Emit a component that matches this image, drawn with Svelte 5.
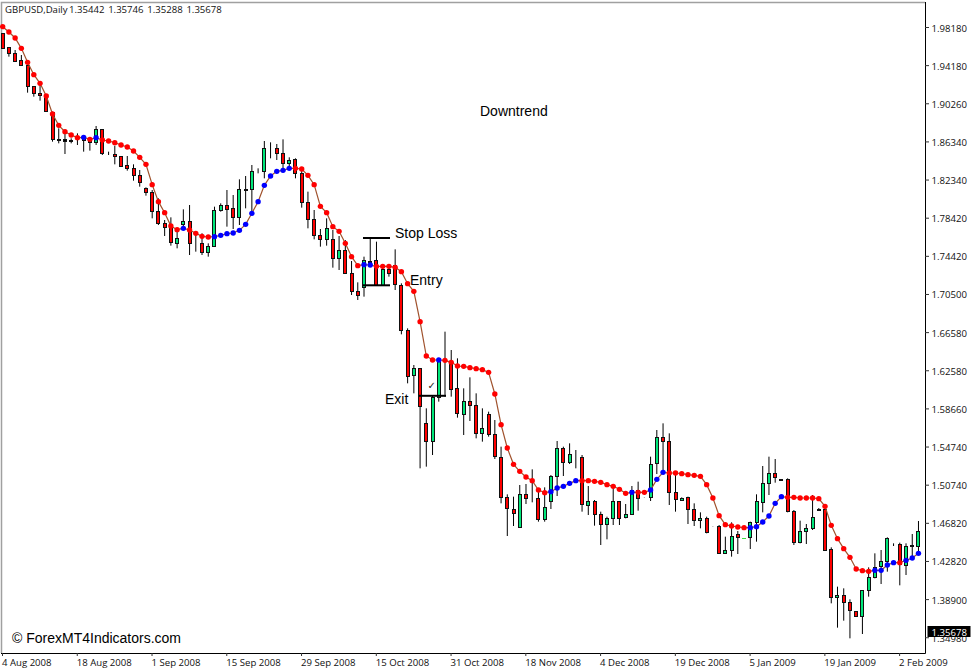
<script lang="ts">
	// bars traced off the chart at 3x: [bodyTop, bodyBottom, wickTop, wickBottom, colour, dotY, dotColour]
	// each block has its own y origin, values are in third-pixels from there
	const r = 'r', g = 'g', k = 'k', l = 'l', b = 'b';
	const blocks = [
		{ y0: 0, rows: [
			[100,145,100,145,r,80,r],[142,160,142,170,r,96,r],[160,182,150,185,r,114,r],[180,195,165,198,r,145,r],
			[195,258,195,278,r,187,r],[258,280,258,290,r,224,r],[280,284,255,302,r,250,r],[285,332,282,332,r,288,r],
			[335,418,335,425,r,342,r],[417,419,385,430,k,376,r],[418,422,395,462,k,395,r],[421,424,415,430,k,405,r],
			[420,421,400,435,k,413,r],[413,421,405,455,r,412,b],[413,427,413,452,r,418,r],[387,427,378,435,g,413,b],
			[388,460,388,465,r,420,r],[461,463,455,465,k,423,r],[463,469,437,493,r,428,r],[469,497,469,500,r,435,r],
			[495,505,468,512,r,441,r]
		] },
		{ y0: 130, rows: [
			[113,135,103,152,r,63,r],[134,157,120,170,r,82,r],[175,187,172,197,r,103,r],[186,242,180,265,r,164,r],
			[243,278,205,285,r,215,r],[280,292,270,318,r,248,r],[290,337,262,347,r,288,r],[324,338,300,355,g,299,r],
			[273,283,238,300,g,295,b],[273,338,225,375,r,300,r],[338,340,315,365,k,310,r],[340,367,310,375,r,319,r],
			[347,367,340,380,g,321,r],[240,347,230,350,g,320,b],[224,241,220,245,g,316,b],[226,236,180,290,r,311,b],
			[235,262,195,297,r,309,b],[178,260,148,285,g,301,b],[178,179,138,235,k,283,b],[124,178,105,250,g,250,b],
			[122,123,115,130,k,215,b],[55,124,33,145,g,166,b],[53,54,37,85,k,138,b],[55,70,42,90,r,124,b],
			[70,98,28,125,r,121,b],[91,98,82,118,g,115,b],[88,130,85,145,r,115,r],[130,217,115,233,r,117,r],
			[217,268,185,295,r,136,r],[268,315,240,328,r,164,r],[316,327,297,350,r,229,r],[295,327,265,347,g,248,r],
			[328,385,300,413,r,290,r],[359,385,318,420,g,304,r],[361,430,330,432,r,340,r],[430,483,393,495,r,380,r],
			[483,496,457,510,r,407,r],[390,472,380,500,g,404,b]
		] },
		{ y0: 220, rows: [
			[122,125,55,130,k,135,b],[120,195,65,195,r,139,r],[148,195,140,195,g,139,r],[148,158,135,170,r,139,r],
			[135,193,88,210,r,142,r],[195,330,190,343,r,155,r],[330,467,325,490,r,191,r],[445,466,435,520,g,214,r],
			[445,557,445,745,r,305,r],[608,662,565,740,r,408,r],[530,662,525,705,g,420,r],[422,530,415,545,g,420,b],
			[419,421,335,530,k,421,r],[432,508,390,530,r,427,r],[505,580,415,593,r,438,r],[543,583,505,645,g,439,r],
			[543,556,472,603,r,443,r],[556,640,520,655,r,446,r],[625,638,565,665,g,449,r],[583,643,575,650,r,457,r],
			[643,708,600,717,r,522,r]
		] },
		{ y0: 400, rows: [
			[170,290,140,310,r,74,r],[290,325,283,408,r,144,r],[328,338,290,378,r,193,r],[283,382,255,382,g,214,r],
			[283,293,252,312,r,231,r],[293,295,208,307,k,242,r],[295,358,270,365,r,270,r],[320,358,262,365,g,278,r],
			[227,302,225,327,g,275,b],[143,227,123,288,g,264,b],[143,185,140,228,r,259,b],[162,186,130,192,g,250,b],
			[162,163,150,205,k,242,b],[172,313,165,335,r,242,r],[302,314,258,345,g,242,r],[304,343,300,377,r,244,r],
			[343,372,335,435,r,247,r],[355,372,350,418,g,254,r],[304,355,265,375,g,259,r],[304,353,304,375,r,268,r],
			[343,352,312,355,g,280,r],[270,343,258,345,g,277,b],[270,295,245,332,r,277,r],[293,294,293,294,k,277,r],
			[193,292,170,303,g,270,b],[112,190,90,222,g,238,b],[112,124,70,218,r,217,b],[124,277,100,315,r,219,r],
			[277,298,225,335,r,219,r],[295,301,292,302,g,221,r],[292,328,290,372,r,224,r],[328,360,310,378,r,226,r],
			[353,361,337,385,g,229,r],[354,397,350,400,r,254,r],[378,379,378,379,k,294,r],[377,458,375,460,r,347,r]
		] },
		{ y0: 440, rows: [
			[331,338,290,340,g,254,r],[287,331,247,350,g,258,r],[283,292,273,342,r,261,r],[295,296,295,296,l,263,r],
			[247,292,245,327,g,263,b],[184,247,163,305,g,260,b],[130,185,78,217,g,246,b],[98,130,50,165,g,228,b],
			[98,112,57,128,r,190,b],[118,119,118,119,k,170,b],[118,213,115,217,r,172,r],[212,305,210,315,r,172,r],
			[274,305,242,310,g,174,r],[264,274,252,312,g,174,r],[232,265,165,270,g,174,r],[208,209,204,212,k,176,r],
			[207,330,195,333,r,199,r],[327,472,322,490,r,256,r],[464,472,440,563,g,296,r],[464,487,445,542,r,326,r],
			[487,510,478,595,r,352,r],[514,527,514,530,r,387,r],[451,529,451,582,g,392,r],[412,451,382,470,g,394,r],
			[380,412,340,415,g,391,b],[362,379,330,432,g,391,b],[295,362,292,395,g,375,b],[312,313,310,318,k,368,b],
			[313,373,308,436,r,368,r],[317,374,310,405,g,361,b],[316,318,282,350,k,354,b],[274,317,243,345,g,340,b]
		] }
	];

	const step = 6.23;
	const snap = (v) => Math.round(v) + 0.5;
	const bars = blocks
		.flatMap((block) => block.rows.map((row) => ({ y0: block.y0, row })))
		.map(({ y0, row }, i) => {
			const x = 2.67 + i * step;
			const top = snap(y0 + row[0] / 3);
			return {
				x,
				left: snap(x - 2),
				top,
				height: snap(y0 + row[1] / 3) - top,
				hi: y0 + row[2] / 3,
				lo: y0 + row[3] / 3,
				kind: row[4],
				dotY: y0 + row[5] / 3,
				dot: row[6]
			};
		});

	const smoothLine = bars.map((bar) => `${bar.x.toFixed(2)},${bar.dotY.toFixed(2)}`).join(' ');

	const prices = ['1.98180','1.94180','1.90260','1.86340','1.82340','1.78420','1.74420','1.70500','1.66580','1.62580','1.58660','1.54740','1.50740','1.46820','1.42820','1.38900','1.34980'];
	const dates = ['4 Aug 2008','18 Aug 2008','1 Sep 2008','15 Sep 2008','29 Sep 2008','15 Oct 2008','31 Oct 2008','18 Nov 2008','4 Dec 2008','19 Dec 2008','5 Jan 2009','19 Jan 2009','2 Feb 2009'];
	const priceY = (i) => 27.5 + i * 38.14;
	const dateX = (i) => 2 + i * 74.76;
</script>

<div class="chart-window">
	<svg viewBox="0 0 977 672" width="977" height="672">
		<!-- frame -->
		<path class="frame-light" d="M1.5 653V2.5H925" />
		<path class="frame" d="M925.5 2V653.5H1" />

		<!-- axes -->
		{#each prices as price, i}
			<line class="tick" x1="925" x2="929" y1={priceY(i)} y2={priceY(i)} />
			<text class="axis-text" x="931.5" y={priceY(i) + 4}>{price}</text>
		{/each}
		{#each dates as date, i}
			<line class="tick" x1={dateX(i) + 0.5} x2={dateX(i) + 0.5} y1="653" y2="656" />
			<text class="axis-text" x={dateX(i)} y="666">{date}</text>
		{/each}

		<!-- candles -->
		{#each bars as bar}
			<line class="wick" x1={bar.x} x2={bar.x} y1={bar.hi} y2={bar.lo} />
		{/each}
		{#each bars as bar}
			{#if bar.kind === 'l'}
				<line class="lime" x1={bar.x - 2} x2={bar.x + 2} y1={bar.top} y2={bar.top} />
			{:else}
				<rect class="body {bar.kind}" x={bar.left} y={bar.top} width="3" height={bar.height} />
			{/if}
		{/each}

		<!-- smoothed average -->
		<polyline class="average" points={smoothLine} />
		{#each bars as bar}
			<circle class="dot {bar.dot}" cx={bar.x} cy={bar.dotY} r="2.7" />
		{/each}

		<!-- trade notes -->
		<line class="note-line" x1="363" x2="390" y1="238" y2="238" />
		<line class="note-line" x1="363" x2="390" y1="285.3" y2="285.3" />
		<line class="note-line" x1="419" x2="446" y1="395.8" y2="395.8" />
		<text class="check" x="427.5" y="389">✓</text>

		<text class="note" x="480" y="116">Downtrend</text>
		<text class="note" x="395" y="238">Stop Loss</text>
		<text class="note" x="410" y="285">Entry</text>
		<text class="note" x="385" y="404">Exit</text>
		<text class="note" x="12" y="643">© ForexMT4Indicators.com</text>

		<text class="title" x="5" y="13">GBPUSD,Daily</text>
		<text class="title quotes" x="69" y="13">1.35442 1.35746 1.35288 1.35678</text>

		<!-- last price tag -->
		<rect class="tag" x="927.5" y="626" width="43" height="11" />
		<text class="tag-text" x="931.5" y="635.5">1.35678</text>
	</svg>
</div>

<style>
	:global(body) {
		background: #fff;
	}

	.chart-window {
		width: 977px;
		height: 672px;
		overflow: hidden;
	}

	svg {
		display: block;
	}

	.frame-light {
		fill: none;
		stroke: #a0a0a0;
		stroke-width: 1.5;
	}

	.frame {
		fill: none;
		stroke: #000;
	}

	.tick {
		stroke: #333;
	}

	.axis-text,
	.title,
	.tag-text {
		font-family: 'Open Sans', sans-serif;
		font-size: 9.6px;
		fill: #111;
	}

	.title.quotes {
		word-spacing: 1.2px;
	}

	.tag {
		fill: #000;
	}

	.tag-text {
		fill: #fff;
	}

	.wick {
		stroke: #000;
	}

	.lime {
		stroke: #3ee03e;
	}

	.body {
		stroke: #111;
	}

	.body.r {
		fill: #f00;
	}

	.body.g {
		fill: #00e67a;
	}

	.body.k {
		fill: #000;
	}

	.average {
		fill: none;
		stroke: #a0522d;
		stroke-width: 1.2;
	}

	.dot.r {
		fill: #f00;
	}

	.dot.b {
		fill: #00f;
	}

	.note-line {
		stroke: #000;
		stroke-width: 2;
	}

	.note {
		font-family: 'Liberation Sans', Arial, sans-serif;
		font-size: 14px;
		fill: #000;
	}

	.check {
		font-family: 'DejaVu Sans', sans-serif;
		font-size: 10px;
		fill: #222;
	}
</style>
